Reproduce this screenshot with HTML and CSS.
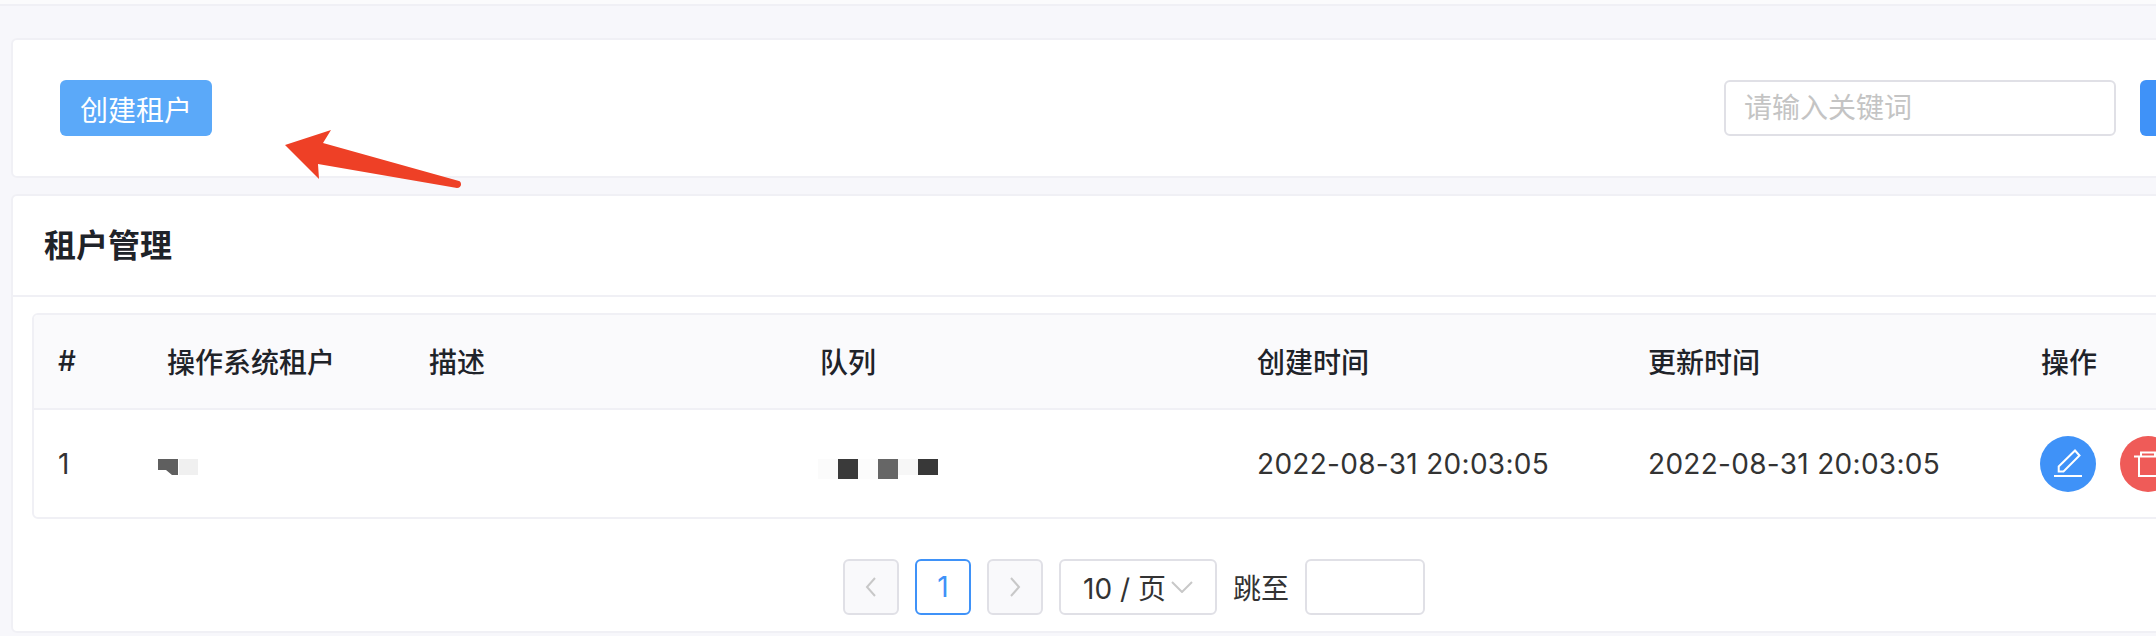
FILE: index.html
```html
<!DOCTYPE html>
<html lang="zh-CN">
<head>
    <meta charset="UTF-8">
    <title>租户管理</title>
    <link rel="stylesheet" href="styles.css">
</head>
<body>
    <div class="topbar"></div>
    <div class="page">
        <div class="card toolbar">
            <button class="btn-create">创建租户</button>
            <div class="search">
                <input class="search-input" type="text" placeholder="请输入关键词">
                <button class="btn-search"></button>
            </div>
        </div>

        <div class="card list">
            <h2 class="list-title">租户管理</h2>
            <div class="table-wrap">
                <table class="table">
                    <colgroup>
                        <col class="col-index">
                        <col class="col-name">
                        <col class="col-desc">
                        <col class="col-queue">
                        <col class="col-time">
                        <col class="col-time2">
                        <col class="col-ops">
                    </colgroup>
                    <thead>
                        <tr>
                            <th>#</th>
                            <th>操作系统租户</th>
                            <th>描述</th>
                            <th>队列</th>
                            <th>创建时间</th>
                            <th>更新时间</th>
                            <th>操作</th>
                        </tr>
                    </thead>
                    <tbody>
                        <tr>
                            <td>1</td>
                            <td>
                                <svg class="mosaic mosaic-name" width="40" height="30" viewBox="0 0 40 30">
                                    <path fill="#5f5f5f" d="M0 10h20v16h-6l-6-5H0z"/>
                                    <rect x="21" y="10" width="19" height="16" fill="#f0f0f0"/>
                                </svg>
                            </td>
                            <td></td>
                            <td>
                                <svg class="mosaic mosaic-queue" width="120" height="30" viewBox="0 0 120 30">
                                    <rect x="0" y="10" width="20" height="20" fill="#fbfbfb"/>
                                    <rect x="20" y="10" width="20" height="20" fill="#3a3a3a"/>
                                    <rect x="40" y="10" width="20" height="20" fill="#fcfcfc"/>
                                    <rect x="60" y="10" width="20" height="20" fill="#666"/>
                                    <rect x="80" y="10" width="20" height="16" fill="#f7f7f7"/>
                                    <rect x="100" y="10" width="20" height="16" fill="#383838"/>
                                </svg>
                            </td>
                            <td class="time">2022-08-31 20:03:05</td>
                            <td class="time">2022-08-31 20:03:05</td>
                            <td>
                                <div class="ops">
                                    <button class="circle circle-edit">
                                        <svg width="56" height="56" viewBox="0 0 56 56" fill="none" stroke="#fff" stroke-width="2">
                                            <path d="M35 14.5l4.5 5-16 16h-4.800v-5z"/>
                                            <path d="M14 40h28"/>
                                        </svg>
                                    </button>
                                    <button class="circle circle-del">
                                        <svg width="56" height="56" viewBox="0 0 56 56" fill="none" stroke="#fff" stroke-width="2">
                                            <path d="M14 20.500h28"/>
                                            <path d="M21 20v-3.500h14v3.500"/>
                                            <path d="M19 20.500v19.500h18v-19.500"/>
                                        </svg>
                                    </button>
                                </div>
                            </td>
                        </tr>
                    </tbody>
                </table>
            </div>
            <div class="pager">
                <button class="page-btn page-off">
                    <svg width="12" height="20" viewBox="0 0 12 20" fill="none" stroke="#c8c8c8" stroke-width="2"><path d="M10 1L2 10l8 9"/></svg>
                </button>
                <button class="page-btn page-on">1</button>
                <button class="page-btn page-off">
                    <svg width="12" height="20" viewBox="0 0 12 20" fill="none" stroke="#c8c8c8" stroke-width="2"><path d="M2 1l8 9-8 9"/></svg>
                </button>
                <div class="page-size">
                    <span>10 / 页</span>
                    <svg width="22" height="12" viewBox="0 0 22 12" fill="none" stroke="#c8c8c8" stroke-width="2"><path d="M1 1l10 10L21 1"/></svg>
                </div>
                <span class="jump-label">跳至</span>
                <input class="jump-input" type="text">
            </div>
        </div>
    </div>

    <!-- red arrow drawn over the screenshot -->
    <svg class="arrow" width="200" height="70" viewBox="0 0 200 70">
        <path fill="#ee4026" d="M4 15L50 0l-8 13 136 38c3 1 3 7-2 7L37 34l1 15z"/>
    </svg>
</body>
</html>
```
FILE: styles.css
```css
html, body {
    margin: 0;
    padding: 0;
}
body {
    width: 2156px;
    height: 636px;
    overflow: hidden;
    position: relative;
    background-color: #f7f7fb;
    font-family: Inter, "Noto Sans CJK SC", sans-serif;
    font-size: 28px;
    color: #333;
}
button, input {
    font-family: inherit;
    font-size: 28px;
    box-sizing: border-box;
}

.topbar {
    height: 4px;
    background-color: #fbfbfc;
    border-bottom: 2px solid #f0f0f5;
}
.page {
    width: 2283px;
    padding: 32px 0 0 11px;
}
.card {
    background-color: #fff;
    border: 2px solid #f0f0f5;
    border-radius: 6px;
}

.toolbar {
    display: flex;
    justify-content: space-between;
    padding: 40px 40px 40px 47px;
    margin-bottom: 16px;
}
.btn-create {
    width: 152px;
    height: 56px;
    padding: 2px 0 0;
    border: none;
    border-radius: 6px;
    background-color: #5ba9f9;
    color: #fff;
}
.search {
    display: flex;
    gap: 24px;
}
.search-input {
    width: 392px;
    height: 56px;
    padding: 0 18px;
    border: 2px solid #e0e0e6;
    border-radius: 6px;
    color: #333;
}
.search-input::placeholder {
    color: #c4c4c4;
}
.btn-search {
    width: 112px;
    height: 56px;
    border: none;
    border-radius: 6px;
    background-color: #3f92f8;
}

.list-title {
    margin: 0;
    height: 99px;
    padding: 0 0 0 31px;
    font-size: 32px;
    font-weight: 600;
    line-height: 99px;
    color: #1f2329;
    border-bottom: 2px solid #f0f0f5;
}
.table-wrap {
    margin: 16px 19px 0;
    border: 2px solid #f0f0f5;
    border-radius: 6px;
    overflow: hidden;
}
.table {
    width: 100%;
    table-layout: fixed;
    border-collapse: collapse;
}
.col-index { width: 109px; }
.col-name { width: 262px; }
.col-desc { width: 391px; }
.col-queue { width: 437px; }
.col-time { width: 391px; }
.col-time2 { width: 393px; }
.table th {
    height: 94px;
    padding: 0 0 2px 24px;
    box-sizing: border-box;
    text-align: left;
    font-weight: 500;
    color: #1f2329;
    background-color: #fafafc;
    border-bottom: 2px solid #f0f0f5;
}
.table td {
    height: 107px;
    padding: 0 0 0 24px;
}
.time {
    letter-spacing: 0.3px;
}
.mosaic {
    display: block;
}
.mosaic-name {
    margin-left: -9px;
}
.mosaic-queue {
    margin-left: -2px;
}
.ops {
    display: flex;
    gap: 24px;
    margin-left: -1px;
}
.circle {
    width: 56px;
    height: 56px;
    padding: 0;
    border: none;
    border-radius: 50%;
    flex: none;
}
.circle svg {
    display: block;
}
.circle-edit {
    background-color: #3f92f8;
}
.circle-del {
    background-color: #ef5b58;
}

.pager {
    display: flex;
    align-items: center;
    padding: 40px 0 16px 830px;
}
.page-btn {
    width: 56px;
    height: 56px;
    padding: 0;
    margin-right: 16px;
    border-radius: 6px;
    display: flex;
    align-items: center;
    justify-content: center;
    color: #333;
}
.page-off {
    background-color: #f9f9fb;
    border: 2px solid #e0e0e6;
}
.page-on {
    background-color: #fff;
    border: 2px solid #3f92f8;
    color: #3f92f8;
}
.page-size {
    box-sizing: border-box;
    width: 158px;
    height: 56px;
    padding: 0 22px;
    border: 2px solid #e0e0e6;
    border-radius: 6px;
    display: flex;
    align-items: center;
    justify-content: space-between;
    white-space: nowrap;
}
.jump-label {
    margin: 0 16px;
}
.jump-input {
    width: 120px;
    height: 56px;
    border: 2px solid #e0e0e6;
    border-radius: 6px;
    background-color: #fff;
}

.arrow {
    position: absolute;
    left: 281px;
    top: 130px;
}
```
